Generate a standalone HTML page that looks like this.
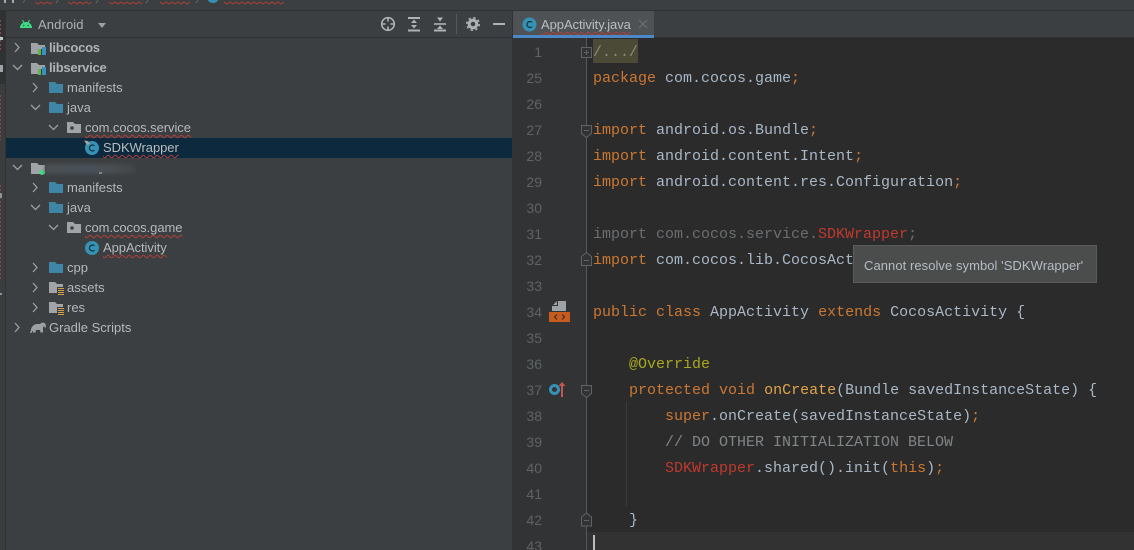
<!DOCTYPE html>
<html><head><meta charset="utf-8">
<style>
html,body{margin:0;padding:0;width:1134px;height:550px;overflow:hidden;background:#3c3f41}
#r{position:relative;width:1134px;height:550px;overflow:hidden;font-family:"Liberation Sans",sans-serif}
.a{position:absolute}
.t{position:absolute;font-size:13px;line-height:20px;height:20px;color:#b4b9bc;white-space:nowrap}
.b{font-weight:bold;letter-spacing:-.25px;margin-top:1px}
.sq{text-decoration:underline wavy #b3403c 1px;text-underline-offset:2px;text-decoration-skip-ink:none;letter-spacing:-.06px}
.l{position:absolute;left:593px;height:26px;margin-top:1px;font:15px/26px "Liberation Mono",monospace;color:#a9b7c6;white-space:pre;letter-spacing:0}
.n{position:absolute;left:514px;width:28px;text-align:right;font:14px/26px "Liberation Sans",sans-serif;color:#5f6365}
.k{color:#cc7832}.g{color:#6a6e70}.e{color:#c0392f}.o{color:#e0a54b}.an{color:#a8a821}.c{color:#808588}
svg{position:absolute;overflow:visible}
</style></head><body><div id="r">

<!-- top strip -->
<div class="a" style="left:0;top:0;width:1134px;height:10px;background:#3c3f41"></div>
<div class="a" style="left:0;top:10px;width:1134px;height:1px;background:#323232"></div>
<svg style="left:0;top:0" width="300" height="10" fill="none">
<path d="M5 0v3M13 0v3" stroke="#a8adb0" stroke-width="2"/>
<path d="M25 0l-2 3M58 0l-2 3M98 0l-2 3M148 0l-2 3M198 0l-2 3" stroke="#666" stroke-width="1"/>
<path d="M35 2l3 2 3-2 3 2 3-2 3 2 2-2M68 2l3 2 3-2 3 2 3-2 3 2 3-2 3 2 2-2M109 2l3 2 3-2 3 2 3-2 3 2 3-2 3 2 3-2 3 2 3-2 3 2M160 2l3 2 3-2 3 2 3-2 3 2 3-2 3 2 3-2 3 2 3-2M224 2l3 2 3-2 3 2 3-2 3 2 3-2 3 2 3-2 3 2 3-2 3 2 3-2 3 2 3-2 3 2 3-2 3 2 3-2 3 2 3-2" stroke="#a8403a"/>
<circle cx="213" cy="-3" r="6" fill="#3592b5"/>
</svg>

<!-- left strip -->
<div class="a" style="left:0;top:11px;width:5px;height:539px;background:#3a3c3e"></div>
<div class="a" style="left:0;top:11px;width:5px;height:73px;background:#2f3133"></div>
<div class="a" style="left:5px;top:11px;width:1px;height:539px;background:#323232"></div>
<svg style="left:0;top:0" width="6" height="400" fill="none">
<path d="M0.500 20v30M0.500 95v45M0.500 185v95" stroke="#8c4a46" stroke-dasharray="2 2"/>
<path d="M0 37h3v3h-3z" fill="#c0c4c6"/><path d="M0 65h3v7h-3z" fill="#a0a4a6"/><path d="M0 193h2v5h-2zM0 293h2v2h-2z" fill="#8f9395"/>
</svg>

<!-- project header -->
<div class="a" style="left:6px;top:37px;width:507px;height:1px;background:#323232"></div>
<svg style="left:20px;top:20px" width="12" height="8">
<path d="M0 8a6 6 0 0 1 12 0z" fill="#3ddc84"/>
<path d="M0 8h12v-1.500h-12z" fill="#3ddc84"/>
<path d="M2.500 0l1.500 3M9.500 0l-1.500 3" stroke="#3ddc84" stroke-width="1"/>
<circle cx="3.800" cy="5.500" r=".7" fill="#3c3f41"/><circle cx="8.200" cy="5.500" r=".7" fill="#3c3f41"/>
</svg>
<div class="t" style="left:38px;top:15px;color:#afb1b3;letter-spacing:.12px">Android</div>
<svg style="left:98px;top:23px" width="8" height="5"><path d="M0 0h8l-4 5z" fill="#9da0a2"/></svg>

<svg style="left:380px;top:16px" width="130" height="17" fill="none" stroke="#afb1b3">
<circle cx="8" cy="8" r="6.300" stroke-width="1.600"/><path d="M8 1v4.500M8 10.500V15M1 8h4.500M10.500 8H15" stroke-width="1.600"/>
<path d="M28 2h12M28 14.500h12" stroke-width="2"/><path d="M31 7l3-3.500 3 3.500zM31 9l3 3.500 3-3.500z" fill="#afb1b3" stroke="none"/>
<path d="M54 8h12" stroke-width="1.600"/><path d="M54 14.500h12" stroke-width="2"/><path d="M57 1.500l3 4 3-4zM57 13l3-3.500 3 3.500z" fill="#afb1b3" stroke="none"/>
<path d="M76.500 -2v20" stroke="#55585a"/>
<circle cx="93" cy="8" r="3.800" stroke-width="3"/><circle cx="93" cy="8" r="6.200" stroke-width="1.600" stroke-dasharray="2.400 2.470"/>
<path d="M113 8h12" stroke-width="2"/>
</svg>

<!-- tree -->
<div class="a" style="left:6px;top:138px;width:507px;height:20px;background:#0d293e"></div>
<svg style="left:0;top:38px" width="140" height="300" fill="none" stroke="#9da0a2" stroke-width="1.300">
<path d="M15 5l4 4.500-4 4.500"/>
<path d="M13 27l4.500 4.500 4.500-4.500"/>
<path d="M33 45l4 4.500-4 4.500"/>
<path d="M31 67l4.500 4.500 4.500-4.500"/>
<path d="M49 87l4.500 4.500 4.500-4.500"/>
<path d="M13 127l4.500 4.500 4.500-4.500"/>
<path d="M33 145l4 4.500-4 4.500"/>
<path d="M31 167l4.500 4.500 4.500-4.500"/>
<path d="M49 187l4.500 4.500 4.500-4.500"/>
<path d="M33 225l4 4.500-4 4.500"/>
<path d="M33 245l4 4.500-4 4.500"/>
<path d="M33 265l4 4.500-4 4.500"/>
<path d="M15 285l4 4.500-4 4.500"/>
</svg>

<svg style="left:0;top:0" width="140" height="340">
<!-- module folders -->
<g><path d="M31 43h6l2 2h6v2h-3v2h-4v5h-7z" fill="#a0a4a6"/><rect x="38" y="49" width="3" height="6" fill="#62b543"/><rect x="42" y="47" width="4" height="8" fill="#3592c4"/></g>
<g transform="translate(0,20)"><path d="M31 43h6l2 2h6v2h-3v2h-4v5h-7z" fill="#a0a4a6"/><rect x="38" y="49" width="3" height="6" fill="#62b543"/><rect x="42" y="47" width="4" height="8" fill="#3592c4"/></g>
<!-- blue folders -->
<path d="M49 82h6l2 2h6v9h-14z" fill="#3f85a5"/>
<path d="M49 102h6l2 2h6v9h-14z" fill="#3f85a5"/>
<path d="M49 182h6l2 2h6v9h-14z" fill="#3f85a5"/>
<path d="M49 202h6l2 2h6v9h-14z" fill="#3f85a5"/>
<path d="M49 262h6l2 2h6v9h-14z" fill="#3f85a5"/>
<!-- package folders -->
<path d="M67 122h6l2 2h6v9h-14z" fill="#a0a4a6"/><circle cx="72" cy="128" r="1.800" fill="#3c3f41"/>
<path d="M67 222h6l2 2h6v9h-14z" fill="#a0a4a6"/><circle cx="72" cy="228" r="1.800" fill="#3c3f41"/>
<!-- class icons -->
<circle cx="92" cy="148" r="7" fill="#3592b5"/><path d="M94.500 145.800a3 3 0 1 0 0 4.400" fill="none" stroke="#16303c" stroke-width="1.200"/><path d="M84 140.500l4 .5 2 3-3 1z" fill="#a0a4a6"/>
<circle cx="92" cy="248" r="7" fill="#3592b5"/><path d="M94.500 245.800a3 3 0 1 0 0 4.400" fill="none" stroke="#16303c" stroke-width="1.200"/>
<!-- third module -->
<path d="M31 163h6l2 2h6v9h-14z" fill="#a0a4a6"/><circle cx="42" cy="172.500" r="2.500" fill="#3ddc84"/>
<!-- resource folders -->
<g><path d="M49 282h6l2 2h6v3h-6v6h-8z" fill="#a0a4a6"/><path d="M58 288.500h6M58 290.500h6M58 292.500h6M58 294.500h6" stroke="#d4a04a" stroke-width="1"/></g>
<g transform="translate(0,20)"><path d="M49 282h6l2 2h6v3h-6v6h-8z" fill="#a0a4a6"/><path d="M58 288.500h6M58 290.500h6M58 292.500h6M58 294.500h6" stroke="#d4a04a" stroke-width="1"/></g>
<!-- gradle elephant -->
<path d="M30 333l1-3c0-3 3-6 6-6h3c1-1.500 4-2 5-.5s1 2.500 1 4h-1.500v-1.500l-1.500 1v5.500h-2.500l-.5-2.500h-4l-.5 2.500h-2.500l-.5-2-1 2.500z" fill="#9da0a2"/>
</svg>

<div class="t b" style="left:49px;top:37px;color:#aeb3b6">libcocos</div>
<div class="t b" style="left:49px;top:57px;color:#aeb3b6">libservice</div>
<div class="t" style="left:67px;top:78px">manifests</div>
<div class="t" style="left:67px;top:98px">java</div>
<div class="t sq" style="left:85px;top:118px">com.cocos.service</div>
<div class="t sq" style="left:103px;top:138px;color:#b9bcbe">SDKWrapper</div>
<div class="a" style="left:45px;top:164px;width:90px;height:10px;background:linear-gradient(90deg,#4b4f52,#47505a 45%,#4a4d50 75%,#434547);filter:blur(1.500px)"></div>
<div class="a" style="left:99px;top:172px;width:3px;height:2px;background:#7f8488"></div>
<div class="t" style="left:67px;top:178px">manifests</div>
<div class="t" style="left:67px;top:198px">java</div>
<div class="t sq" style="left:85px;top:218px">com.cocos.game</div>
<div class="t sq" style="left:103px;top:238px">AppActivity</div>
<div class="t" style="left:67px;top:258px">cpp</div>
<div class="t" style="left:67px;top:278px">assets</div>
<div class="t" style="left:67px;top:298px">res</div>
<div class="t" style="left:49px;top:318px">Gradle Scripts</div>

<!-- divider -->
<div class="a" style="left:512px;top:11px;width:1px;height:539px;background:#323232"></div>

<!-- tab bar -->
<div class="a" style="left:513px;top:11px;width:621px;height:26px;background:#3c3f41"></div>
<div class="a" style="left:513px;top:11px;width:141px;height:24px;background:#4e5254"></div>
<div class="a" style="left:513px;top:37px;width:621px;height:1px;background:#323232"></div>
<div class="a" style="left:513px;top:35px;width:141px;height:3px;background:#4a88c7"></div>
<svg style="left:522px;top:17px" width="16" height="16"><circle cx="7.500" cy="7.500" r="7" fill="#3592b5"/><path d="M10 5.300a3 3 0 1 0 0 4.400" fill="none" stroke="#16303c" stroke-width="1.200"/></svg>
<div class="t sq" style="left:541px;top:15px;color:#bbbdbf">AppActivity.java</div>
<svg style="left:638px;top:19px" width="10" height="10"><path d="M1 1l8 8M9 1l-8 8" stroke="#6e7173" stroke-width="1"/></svg>

<!-- gutter + editor -->
<div class="a" style="left:513px;top:38px;width:74px;height:512px;background:#313335"></div>
<div class="a" style="left:586px;top:38px;width:1px;height:512px;background:#555759"></div>
<div class="a" style="left:587px;top:38px;width:547px;height:512px;background:#2b2b2b"></div>
<div class="a" style="left:587px;top:532px;width:547px;height:18px;background:#323232"></div>
<div class="a" style="left:593px;top:535px;width:2px;height:15px;background:#bbb"></div>
<div class="a" style="left:593px;top:39px;width:45px;height:24px;background:#4b4a37"></div>
<div class="a" style="left:626px;top:402px;width:1px;height:104px;background:#3b3b3b"></div>

<div class="n" style="top:39px">1</div>
<div class="n" style="top:65px">25</div>
<div class="n" style="top:91px">26</div>
<div class="n" style="top:117px">27</div>
<div class="n" style="top:143px">28</div>
<div class="n" style="top:169px">29</div>
<div class="n" style="top:195px">30</div>
<div class="n" style="top:221px">31</div>
<div class="n" style="top:247px">32</div>
<div class="n" style="top:273px">33</div>
<div class="n" style="top:299px">34</div>
<div class="n" style="top:325px">35</div>
<div class="n" style="top:351px">36</div>
<div class="n" style="top:377px">37</div>
<div class="n" style="top:403px">38</div>
<div class="n" style="top:429px">39</div>
<div class="n" style="top:455px">40</div>
<div class="n" style="top:481px">41</div>
<div class="n" style="top:507px">42</div>
<div class="n" style="top:533px">43</div>

<!-- gutter icons -->
<svg style="left:540px;top:38px" width="60" height="512" fill="none">
<g stroke="#5f6365" fill="#313335">
<rect x="41.500" y="9.500" width="10" height="10"/><path d="M44 14.500h5M46.500 12v5"/>
<path d="M41.500 87.500h10v8l-5 4-5-4z"/><path d="M44 92.500h5"/>
<path d="M41.500 218.500l5-4 5 4v9h-10z"/><path d="M44 222.500h5"/>
<path d="M41.500 347.500h10v8l-5 4-5-4z"/><path d="M44 352.500h5"/>
<path d="M41.500 479l5-4 5 4v9h-10z"/><path d="M44 482.500h5"/>
</g>
<path d="M18 263h8v10H12v-5h6z" fill="#9ea3a7"/>
<path d="M13 267l4-4v4z" fill="#9ea3a7"/>
<rect x="9" y="274" width="21" height="10" fill="#c75a1c"/>
<path d="M17 276.500l-2.500 2.500 2.500 2.500M22 276.500l2.500 2.500-2.500 2.500" stroke="#2b2b2b" stroke-width="1"/>
<circle cx="14.500" cy="351.500" r="4" stroke="#3592b5" stroke-width="3"/>
<path d="M22 359v-13" stroke="#c75450" stroke-width="2"/><path d="M18.500 348l3.500-4 3.500 4z" fill="#c75450"/>
</svg>

<!-- code -->
<div class="l" style="top:39px;color:#8b8b78">/.../</div>
<div class="l" style="top:65px"><span class="k">package</span> com.cocos.game<span class="k">;</span></div>
<div class="l" style="top:117px"><span class="k">import</span> android.os.Bundle<span class="k">;</span></div>
<div class="l" style="top:143px"><span class="k">import</span> android.content.Intent<span class="k">;</span></div>
<div class="l" style="top:169px"><span class="k">import</span> android.content.res.Configuration<span class="k">;</span></div>
<div class="l g" style="top:221px">import com.cocos.service.<span class="e">SDKWrapper</span>;</div>
<div class="l" style="top:247px"><span class="k">import</span> com.cocos.lib.CocosAct</div>
<div class="l" style="top:299px"><span class="k">public class</span> AppActivity <span class="k">extends</span> CocosActivity {</div>
<div class="l an" style="top:351px">    @Override</div>
<div class="l" style="top:377px">    <span class="k">protected void</span> <span class="o">onCreate</span>(Bundle savedInstanceState) {</div>
<div class="l" style="top:403px">        <span class="k">super</span>.onCreate(savedInstanceState)<span class="k">;</span></div>
<div class="l c" style="top:429px">        // DO OTHER INITIALIZATION BELOW</div>
<div class="l" style="top:455px">        <span class="e">SDKWrapper</span>.shared().init(<span class="k">this</span>)<span class="k">;</span></div>
<div class="l" style="top:507px">    }</div>

<!-- tooltip -->
<div class="a" style="left:853px;top:245px;width:242px;height:36px;background:#4b4d4d;border:1px solid #5a5c5c;font-size:13px;line-height:39px;color:#b4bcc4;text-indent:10px;white-space:nowrap;letter-spacing:.06px">Cannot resolve symbol 'SDKWrapper'</div>

</div></body></html>
